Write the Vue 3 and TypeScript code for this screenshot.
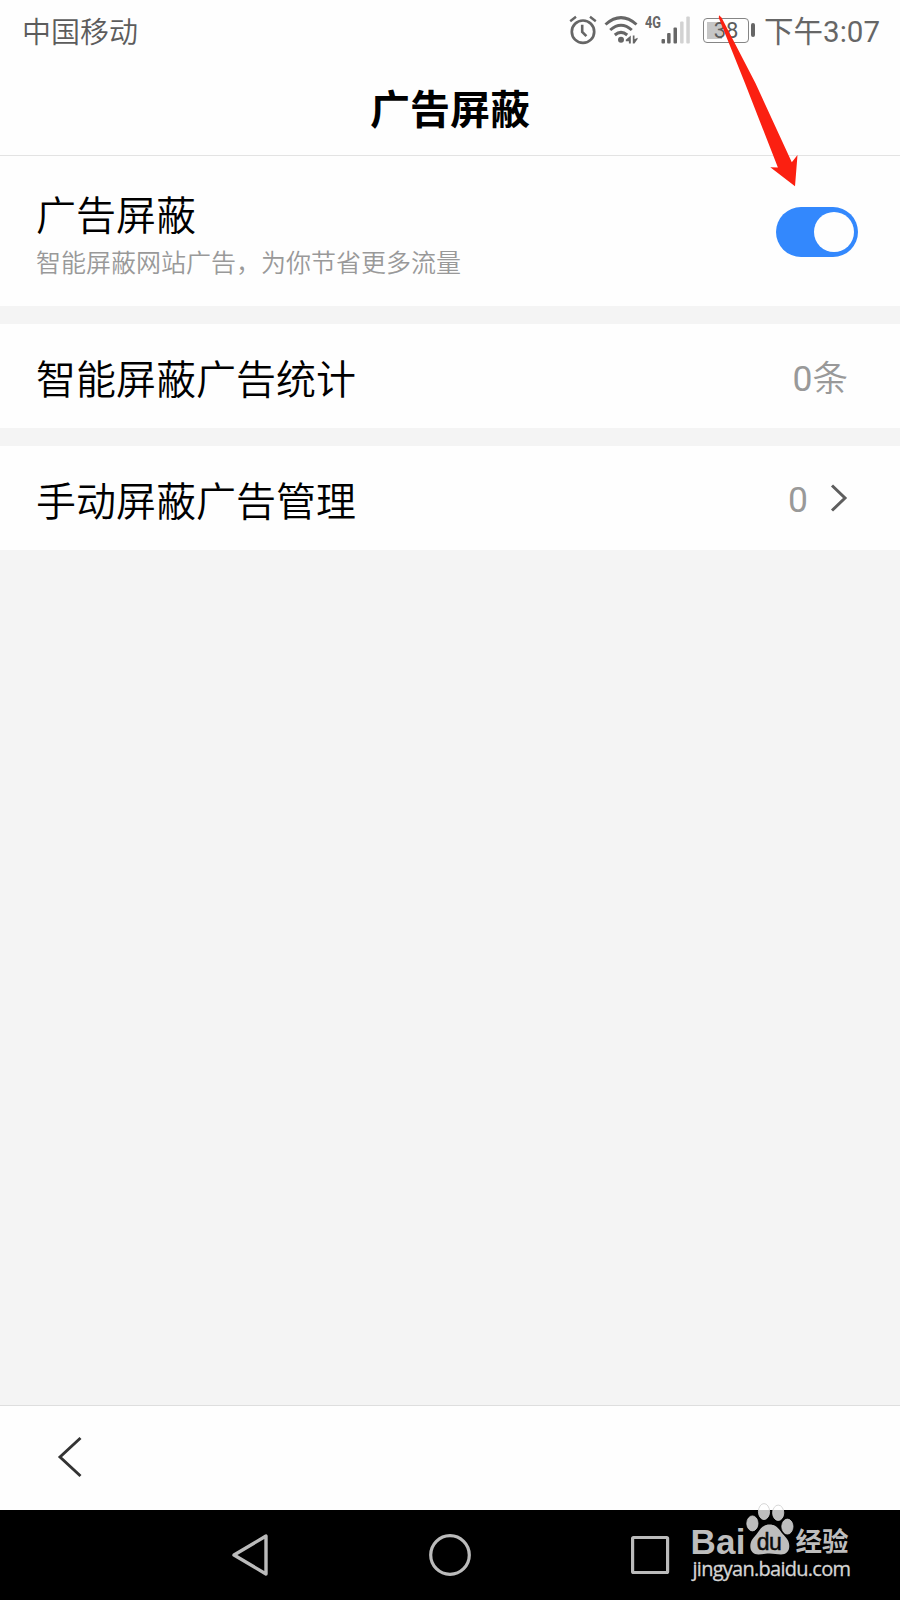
<script setup lang="ts">
interface SignalBar {
  x: number
  height: number
  active: boolean
}

const signalBars: SignalBar[] = [
  { x: 1.8, height: 4.5, active: true },
  { x: 7.4, height: 10.5, active: true },
  { x: 13.8, height: 16, active: true },
  { x: 20.4, height: 22, active: false },
  { x: 26.6, height: 27, active: false },
]

const carrier = '中国移动'
const pageTitle = '广告屏蔽'
</script>

<template>
  <div class="screen">
    <header class="top">
      <div class="status">
        <span class="carrier">{{ carrier }}</span>
        <svg class="alarm" viewBox="0 0 28 30" width="28" height="30">
          <circle cx="14" cy="16.7" r="11.2" fill="none" stroke="#666" stroke-width="2.7" />
          <path d="M13.2 9.8V17L17.4 21.2" fill="none" stroke="#666" stroke-width="2.6" />
          <path d="M1.2 6.2L7 1.8M21 1.8L26.8 6.2" fill="none" stroke="#666" stroke-width="2.4" />
        </svg>
        <svg class="wifi" viewBox="0 0 34 30" width="34" height="30">
          <g fill="none" stroke="#666" stroke-width="3">
            <path d="M1.5 9.5Q17 -4.2 32.5 9.5" />
            <path d="M6.2 15Q17 5.4 27.8 15" />
            <path d="M10.8 20Q17 14.8 23.2 20" />
          </g>
          <circle cx="17" cy="24.8" r="3" fill="#666" />
          <path d="M26.8 20.5V28.5H24.9V26.2H21.8V24.8ZM28.8 20.5V28.5H30.5L33.6 24V22.8L30.5 24.2V20.5Z" fill="#666" />
        </svg>
        <span class="network">4G</span>
        <svg class="signal" viewBox="0 0 31 30" width="31" height="30">
          <rect
            v-for="bar in signalBars"
            :key="bar.x"
            :x="bar.x - 1.3"
            :y="28.5 - bar.height"
            width="3.5"
            :height="bar.height"
            rx="1"
            :fill="bar.active ? '#666' : '#d2d2d2'"
          />
        </svg>
        <div class="battery">
          <div class="cell">
            <span class="charge"></span>
            <span class="percent">38</span>
          </div>
          <span class="cap"></span>
        </div>
        <span class="clock">下午3:07</span>
      </div>
      <h1 class="title">{{ pageTitle }}</h1>
    </header>

    <main class="settings">
      <section class="row row-toggle">
        <div class="labels">
          <div class="label">广告屏蔽</div>
          <div class="hint">智能屏蔽网站广告，为你节省更多流量</div>
        </div>
        <div class="toggle"><span class="knob"></span></div>
      </section>
      <section class="row">
        <div class="label">智能屏蔽广告统计</div>
        <div class="value value-count">0<span class="unit">条</span></div>
      </section>
      <section class="row">
        <div class="label">手动屏蔽广告管理</div>
        <div class="value">0</div>
        <svg class="chevron" viewBox="0 0 18 30" width="18" height="30">
          <path d="M2 2.5L15 15L2 27.5" fill="none" stroke="#5e5e5e" stroke-width="3" />
        </svg>
      </section>
    </main>

    <footer class="toolbar">
      <svg viewBox="0 0 26 42" width="26" height="42">
        <path d="M23.5 2L3 21L23.5 40" fill="none" stroke="#333" stroke-width="2.9" />
      </svg>
    </footer>

    <nav class="system-nav">
      <svg viewBox="0 0 42 44" width="42" height="44">
        <path d="M37 3V41L5 22Z" fill="none" stroke="#bbb" stroke-width="3.4" stroke-linejoin="round" />
      </svg>
      <svg viewBox="0 0 42 44" width="42" height="44">
        <circle cx="21" cy="22" r="19.3" fill="none" stroke="#bbb" stroke-width="3.2" />
      </svg>
      <svg viewBox="0 0 42 44" width="42" height="44">
        <rect x="3.6" y="4.5" width="35" height="35" rx="1" fill="none" stroke="#bbb" stroke-width="3.2" />
      </svg>
    </nav>

    <svg class="pointer" viewBox="0 0 100 190" width="100" height="190">
      <path d="M19 15.2L21.5 17.5L55.5 83.3L91.8 162.3L97.5 155L95 186.3L70.3 167.3L77.9 167.6L45 83.3L18.8 18Z" fill="#fb2011" />
    </svg>

    <svg class="watermark" viewBox="0 0 170 90" width="170" height="90">
      <g class="paw">
        <ellipse cx="69.4" cy="23.4" rx="5.6" ry="7.5" />
        <ellipse cx="81" cy="11.6" rx="5.6" ry="8" />
        <ellipse cx="95.2" cy="12.8" rx="5.6" ry="7.7" />
        <ellipse cx="104.4" cy="26.6" rx="5.6" ry="7.5" />
      </g>
      <path d="M86.5 24.5C92.5 24.5 95.3 28 98.5 32.5C102 37 106.3 39.5 106.3 46C106.3 51.5 103 54.5 98 54.5C94 54.5 91 53.5 86.5 53.5C82 53.5 79.5 54.5 75.5 54.5C70.5 54.5 67.3 51.5 67.3 46C67.3 40 71.5 37 74.8 32.5C78 28 80.5 24.5 86.5 24.5Z" fill="#bdbdbd" />
      <text class="brand" x="7.5" y="53.5" textLength="55">Bai</text>
      <text class="du" x="73.8" y="50" textLength="25">du</text>
      <text class="cjk" x="112.5" y="51.2" textLength="53">经验</text>
      <text class="site" x="9.5" y="75.5" textLength="158.5">jingyan.baidu.com</text>
    </svg>
  </div>
</template>

<style>
body {
  margin: 0;
}
</style>

<style scoped>
.screen {
  position: relative;
  display: flex;
  flex-direction: column;
  width: 900px;
  height: 1600px;
  overflow: hidden;
  background: #f4f4f4;
  font-family: "Noto Sans CJK SC", sans-serif;
  font-weight: 350;
  color: #000;
}
.top {
  height: 155px;
  flex: none;
  background: #fefefe;
  border-bottom: 1px solid #e3e3e3;
}
.status {
  display: flex;
  align-items: center;
  height: 60px;
  padding: 0 20px 0 22px;
  color: #666;
}
.carrier {
  flex: 1;
  font-size: 29px;
  line-height: 40px;
  color: #5c5c5c;
}
.alarm {
  margin-right: 7px;
}
.wifi {
  margin-right: 7px;
}
.network {
  width: 16px;
  align-self: flex-start;
  margin-top: 14px;
  font: bold 16px/17px Roboto, sans-serif;
  transform: scaleX(.8);
  transform-origin: left;
}
.signal {
  margin-right: 11px;
}
.battery {
  display: flex;
  align-items: center;
  gap: 2px;
  margin-right: 9px;
}
.cell {
  position: relative;
  box-sizing: border-box;
  width: 46px;
  height: 25px;
  border: 1.5px solid #858585;
  border-radius: 4px;
}
.charge {
  position: absolute;
  left: 3px;
  top: 3px;
  width: 15px;
  height: 17px;
  background: #c6c6c6;
}
.percent {
  position: absolute;
  inset: 0;
  text-align: center;
  font: 22px/24px Roboto, sans-serif;
  color: #5c5c5c;
}
.cap {
  width: 4px;
  height: 14px;
  border-radius: 2px;
  background: #666;
}
.clock {
  padding-top: 3px;
  font: 29.5px/40px Roboto, "Noto Sans CJK SC", sans-serif;
}
.title {
  margin: 17px 0 0;
  text-align: center;
  font-size: 40px;
  line-height: 60px;
  font-weight: 700;
}
.settings {
  flex: 1;
  display: flex;
  flex-direction: column;
  gap: 18px;
}
.row {
  display: flex;
  align-items: center;
  box-sizing: border-box;
  height: 104px;
  padding: 0 52px 0 36px;
  background: #fefefe;
}
.row-toggle {
  height: 150px;
  padding-top: 2px;
  padding-right: 42px;
}
.labels {
  flex: 1;
}
.label {
  flex: 1;
  font-size: 40px;
  line-height: 58px;
}
.row > .label {
  padding-top: 2px;
}
.hint {
  font-size: 25px;
  line-height: 38px;
  color: #999;
}
.toggle {
  display: flex;
  justify-content: flex-end;
  align-items: center;
  box-sizing: border-box;
  width: 82px;
  height: 50px;
  padding-right: 4px;
  border-radius: 25px;
  background: #3388fd;
}
.knob {
  width: 40px;
  height: 40px;
  border-radius: 50%;
  background: #fefefe;
}
.value {
  padding-top: 3px;
  font: 35.5px/50px Roboto, "Noto Sans CJK SC", sans-serif;
  color: #999;
}
.value-count {
  padding-top: 5px;
}
.unit {
  font-weight: 350;
}
.chevron {
  margin-left: 22px;
}
.toolbar {
  display: flex;
  align-items: center;
  box-sizing: border-box;
  height: 105px;
  padding: 0 0 2px 57px;
  border-top: 1px solid #dedede;
  background: #fefefe;
}
.system-nav {
  display: flex;
  align-items: center;
  justify-content: center;
  gap: 158px;
  height: 90px;
  background: #000;
}
.pointer {
  position: absolute;
  left: 700px;
  top: 0;
}
.watermark {
  position: absolute;
  left: 683px;
  top: 1500px;
}
.paw {
  fill: rgba(255, 255, 255, .74);
  stroke: rgba(205, 205, 205, .8);
  stroke-width: 1;
}
.brand {
  font: bold 35px "Liberation Sans", sans-serif;
  fill: #bdbdbd;
}
.du {
  font: 23px "Liberation Sans", sans-serif;
  fill: #0a0a0a;
  stroke: #0a0a0a;
  stroke-width: .5;
}
.cjk {
  font: bold 26.5px "Noto Sans CJK SC", sans-serif;
  fill: #bdbdbd;
}
.site {
  font: 20px "Open Sans", sans-serif;
  fill: #d4d4d4;
  stroke: #d4d4d4;
  stroke-width: .3;
}
</style>
